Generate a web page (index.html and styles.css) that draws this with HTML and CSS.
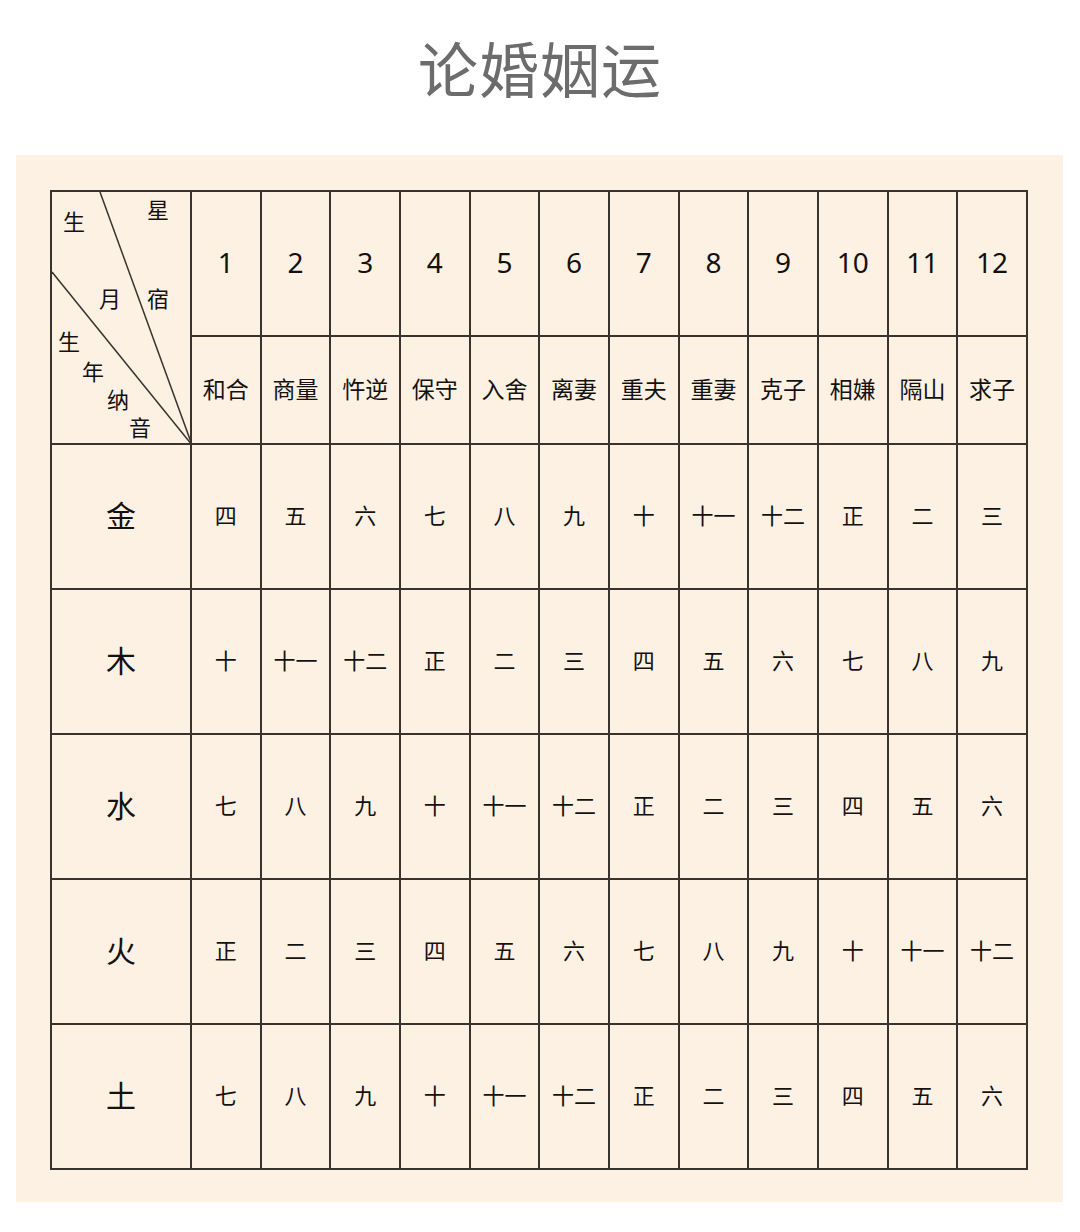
FILE: index.html
```html
<!DOCTYPE html>
<html lang="zh-CN">
<head>
<meta charset="utf-8">
<title>论婚姻运</title>
<link rel="stylesheet" href="styles.css">
</head>
<body>
<header class="title-bar"><h1 class="title">论婚姻运</h1></header>
<main class="panel">
<table class="grid">
<colgroup><col class="c-head"><col span="12" class="c-data"></colgroup>
<tr class="row-num">
<td class="corner" rowspan="2">
<svg class="diag" width="140" height="253" viewBox="0 0 140 253"><line x1="48" y1="0" x2="140" y2="253"/><line x1="0" y1="80" x2="140" y2="253"/></svg>
<span class="lb" style="left:22px;top:29px">生</span>
<span class="lb" style="left:106px;top:17px">星</span>
<span class="lb" style="left:58px;top:106px">月</span>
<span class="lb" style="left:106px;top:106px">宿</span>
<span class="lb" style="left:17px;top:149px">生</span>
<span class="lb" style="left:41px;top:179px">年</span>
<span class="lb" style="left:66px;top:207px">纳</span>
<span class="lb" style="left:88px;top:235px">音</span>
</td>
<td>1</td><td>2</td><td>3</td><td>4</td><td>5</td><td>6</td><td>7</td><td>8</td><td>9</td><td>10</td><td>11</td><td>12</td>
</tr>
<tr class="row-name">
<td>和合</td><td>商量</td><td>忤逆</td><td>保守</td><td>入舍</td><td>离妻</td><td>重夫</td><td>重妻</td><td>克子</td><td>相嫌</td><td>隔山</td><td>求子</td>
</tr>
<tr class="row-data"><th>金</th><td>四</td><td>五</td><td>六</td><td>七</td><td>八</td><td>九</td><td>十</td><td>十一</td><td>十二</td><td>正</td><td>二</td><td>三</td></tr>
<tr class="row-data"><th>木</th><td>十</td><td>十一</td><td>十二</td><td>正</td><td>二</td><td>三</td><td>四</td><td>五</td><td>六</td><td>七</td><td>八</td><td>九</td></tr>
<tr class="row-data"><th>水</th><td>七</td><td>八</td><td>九</td><td>十</td><td>十一</td><td>十二</td><td>正</td><td>二</td><td>三</td><td>四</td><td>五</td><td>六</td></tr>
<tr class="row-data"><th>火</th><td>正</td><td>二</td><td>三</td><td>四</td><td>五</td><td>六</td><td>七</td><td>八</td><td>九</td><td>十</td><td>十一</td><td>十二</td></tr>
<tr class="row-data"><th>土</th><td>七</td><td>八</td><td>九</td><td>十</td><td>十一</td><td>十二</td><td>正</td><td>二</td><td>三</td><td>四</td><td>五</td><td>六</td></tr>
</table>
</main>
</body>
</html>
```
FILE: styles.css
```css
html, body {
  margin: 0;
  padding: 0;
  background: #ffffff;
}
body {
  width: 1080px;
  font-family: "Noto Sans CJK SC", "Noto Sans", sans-serif;
  color: #141211;
}
.title-bar {
  height: 155px;
  display: flex;
  align-items: center;
  justify-content: center;
}
.title {
  margin: 0 0 22px 0;
  font-size: 60px;
  font-weight: 400;
  color: #6c6c6c;
  letter-spacing: 1px;
  line-height: 1;
}
.panel {
  margin-left: 16px;
  width: 1047px;
  height: 1047px;
  box-sizing: border-box;
  padding: 35px 0 0 34px;
  background: #fdf1e3;
}
.grid {
  border-collapse: collapse;
  table-layout: fixed;
  width: 978px;
}
.c-head { width: 140px; }
.grid td, .grid th {
  border: 2px solid #3a322d;
  padding: 0 0 5px 0;
  text-align: center;
  vertical-align: middle;
  font-weight: 400;
}
.row-num { height: 145px; }
.row-num td {
  font-family: "Noto Sans", "Open Sans", sans-serif;
  font-size: 28px;
  padding-bottom: 4px;
}
.row-name { height: 108px; }
.row-name td {
  font-size: 23px;
}
.row-data { height: 145px; }
.row-data td {
  font-size: 22px;
}
.row-data th {
  font-size: 30px;
  font-weight: 400;
}
.grid td.corner {
  position: relative;
  padding: 0;
}
.diag {
  position: absolute;
  left: 0;
  top: 0;
  stroke: #3a322d;
  stroke-width: 1.5;
}
.lb {
  position: absolute;
  font-size: 22px;
  line-height: 22px;
  width: 22px;
  height: 22px;
  transform: translate(-50%, -50%);
  text-align: center;
}
```
